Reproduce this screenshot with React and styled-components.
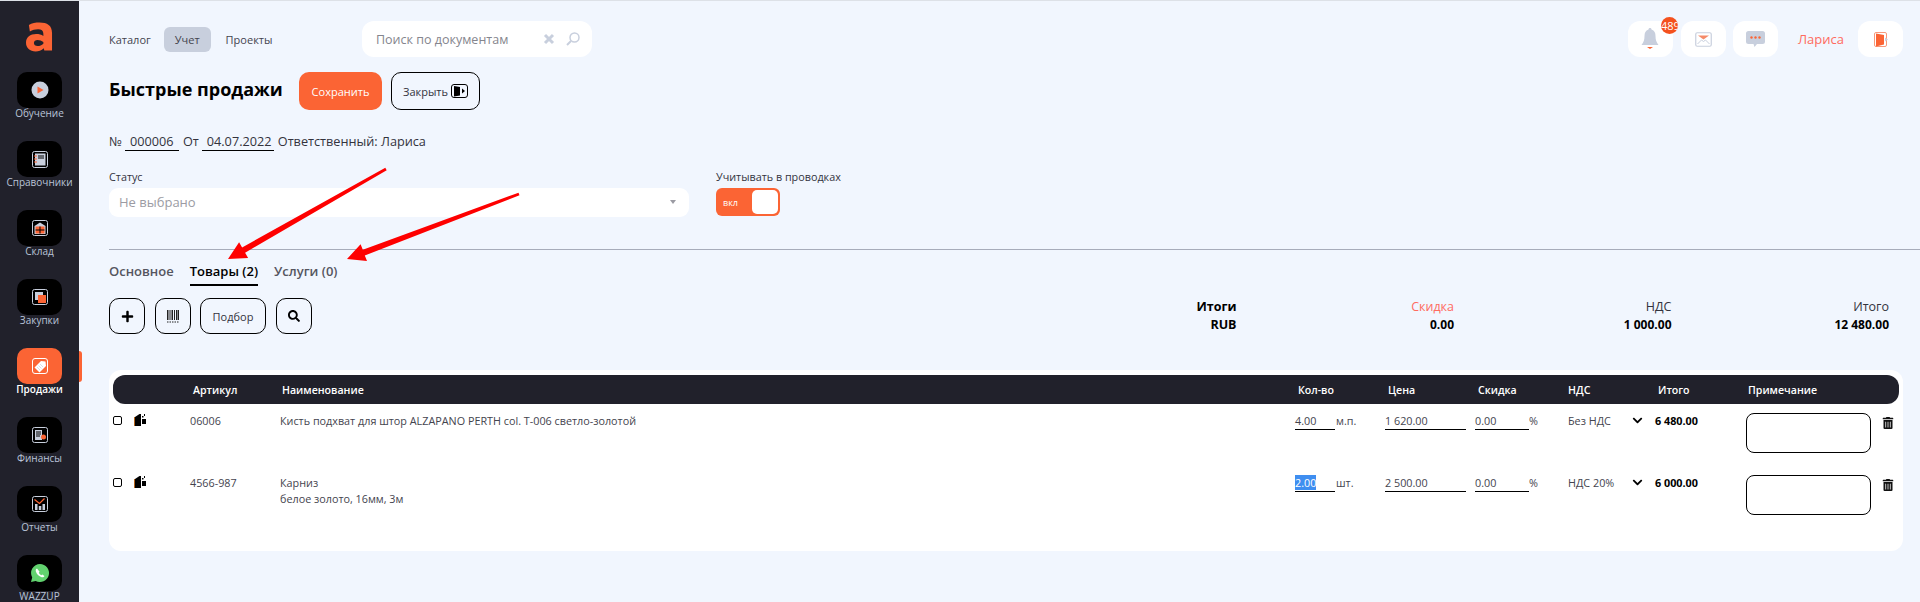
import React from "react";
import styled, { createGlobalStyle } from "styled-components";
import { FaPlus, FaSearch, FaTrashAlt, FaChevronDown } from "react-icons/fa";

const orange = "#fb6434";
const dark = "#21212b";
const grey = "#c8cfdd";
const fontStack = `"Open Sans", "Noto Sans", sans-serif`;

const GlobalStyle = createGlobalStyle`
  html, body {
    margin: 0;
    height: 602px;
    overflow: hidden;
    background: #f1f6fe;
    font-family: ${fontStack};
    color: #33333d;
  }
  * { box-sizing: border-box; }
`;

const Page = styled.div`
  display: flex;
  height: 602px;
  border-top: 1px solid #dde1e7;
  position: relative;
  overflow: hidden;
`;

const Sidebar = styled.nav`
  width: 79px;
  flex: none;
  background: ${dark};
  display: flex;
  flex-direction: column;
  align-items: center;
  padding-top: 21px;
`;

const Logo = styled.div`
  height: 50px;
  flex: none;
  display: flex;
  align-items: flex-start;
  justify-content: center;
`;

const NavItem = styled.div`
  width: 79px;
  height: 69px;
  flex: none;
  display: flex;
  flex-direction: column;
  align-items: center;
  position: relative;
  color: ${(p) => (p.$active ? "#fff" : "#b9c4d8")};
  font-size: 10px;
  line-height: 11px;
  font-weight: ${(p) => (p.$active ? 600 : 400)};
`;

const NavTile = styled.div`
  width: 45px;
  height: 36px;
  border-radius: 10px;
  background: ${(p) => (p.$active ? orange : "#000")};
  display: flex;
  align-items: center;
  justify-content: center;
  flex: none;
`;

const ActiveMark = styled.span`
  position: absolute;
  right: -3px;
  top: 3px;
  width: 3px;
  height: 31px;
  border-radius: 0 3px 3px 0;
  background: ${orange};
`;

const Main = styled.main`
  flex: 1;
  min-width: 0;
  padding: 20px 17px 0 30px;
`;

const TopBar = styled.header`
  display: flex;
  align-items: center;
  height: 36px;
`;

const TopNav = styled.div`
  display: flex;
  align-items: center;
  width: 253px;
  flex: none;
`;

const TopLink = styled.a`
  font-size: 11px;
  height: 25px;
  line-height: 25px;
  padding: 0 ${(p) => (p.$active ? "11px" : "0")};
  margin: 0 ${(p) => (p.$active ? "15px 0 13px" : "0")};
  border-radius: 6px;
  color: #44444e;
  background: ${(p) => (p.$active ? grey : "transparent")};
`;

const SearchBox = styled.div`
  width: 230px;
  height: 36px;
  border-radius: 12px;
  background: #fff;
  display: flex;
  align-items: center;
  padding: 0 12px 0 14px;
  font-size: 12.5px;
  color: #85858d;
`;

const SearchText = styled.span`
  flex: 1;
`;

const TopRight = styled.div`
  margin-left: auto;
  display: flex;
  align-items: center;
`;

const IconTile = styled.div`
  position: relative;
  width: 45px;
  height: 36px;
  border-radius: 12px;
  background: #fff;
  display: flex;
  align-items: center;
  justify-content: center;
  margin-right: ${(p) => p.$gap || 0}px;
`;

const Badge = styled.span`
  position: absolute;
  top: -4px;
  right: -5px;
  width: 17px;
  height: 17px;
  border-radius: 50%;
  background: #f4511e;
  color: #fff;
  font-size: 11px;
  line-height: 17px;
  text-align: center;
  white-space: nowrap;
  overflow: hidden;
`;

const UserName = styled.span`
  color: #ff6b5e;
  font-size: 13px;
  margin-right: 14px;
`;

const TitleRow = styled.div`
  display: flex;
  align-items: center;
  margin-top: 15px;
  height: 38px;
`;

const Title = styled.h1`
  margin: 0 17px 5px 0;
  width: 173px;
  white-space: nowrap;
  font-size: 18px;
  line-height: 28px;
  font-weight: 700;
  color: #000;
`;

const SaveButton = styled.button`
  width: 83px;
  height: 38px;
  border: 0;
  border-radius: 10px;
  background: ${orange};
  color: #fff;
  font: 500 11px ${fontStack};
`;

const OutlineButton = styled.button`
  height: ${(p) => p.$h || 36}px;
  width: ${(p) => p.$w || 36}px;
  margin-left: ${(p) => p.$ml || 0}px;
  flex: none;
  border: 1px solid #000;
  border-radius: 10px;
  background: transparent;
  color: #33333d;
  display: flex;
  align-items: center;
  justify-content: center;
  gap: 3px;
  padding: 0;
  font: 400 11px ${fontStack};
`;

const DocLine = styled.div`
  margin-top: 21px;
  height: 20px;
  display: flex;
  align-items: flex-end;
  font-size: 12.7px;
  line-height: 20px;
  color: #33333d;
`;

const DocField = styled.span`
  display: inline-block;
  width: ${(p) => p.$w}px;
  margin: 0 ${(p) => p.$r}px 0 ${(p) => p.$l}px;
  padding-left: 5px;
  border-bottom: 1px solid #000;
  height: 20px;
`;

const Fields = styled.div`
  display: flex;
  margin-top: 19px;
`;

const FieldLabel = styled.div`
  font-size: 10.8px;
  line-height: 14px;
  margin-bottom: 4px;
  color: #33333d;
`;

const SelectBox = styled.div`
  width: 580px;
  height: 29px;
  border-radius: 9px;
  background: #fff;
  display: flex;
  align-items: center;
  justify-content: space-between;
  padding: 0 13px 1px 10px;
  font-size: 13px;
  color: #9b9ba3;
`;

const Caret = styled.span`
  width: 0;
  height: 0;
  border-left: 3px solid transparent;
  border-right: 3px solid transparent;
  border-top: 4px solid #9b9ba3;
`;

const ToggleColumn = styled.div`
  margin-left: 27px;
`;

const Toggle = styled.div`
  width: 64px;
  height: 28px;
  border-radius: 6px;
  background: ${orange};
  color: #fff;
  font-size: 9px;
  display: flex;
  align-items: center;
  justify-content: space-between;
  padding: 0 2px 0 7px;
`;

const ToggleKnob = styled.span`
  width: 26px;
  height: 24px;
  border-radius: 5px;
  background: #fff;
`;

const Divider = styled.hr`
  margin: 32px -17px 0 0;
  border: 0;
  height: 1px;
  background: #a7acba;
`;

const Tabs = styled.div`
  display: flex;
  gap: 16px;
  height: 36px;
  margin-bottom: 12px;
`;

const Tab = styled.div`
  font-size: 13px;
  font-weight: 600;
  padding-top: 12px;
  line-height: 18px;
  height: 36px;
  color: ${(p) => (p.$active ? "#000" : "#55555f")};
  border-bottom: 2px solid ${(p) => (p.$active ? "#000" : "transparent")};
`;

const ToolRow = styled.div`
  display: flex;
  height: 36px;
`;

const Totals = styled.div`
  margin-left: auto;
  padding-right: 14px;
  display: flex;
`;

const TotalColumn = styled.div`
  width: 217.5px;
  text-align: right;
  font-size: 12.5px;
  line-height: 18px;
  color: ${(p) => (p.$bold ? "#000" : "#33333d")};
  font-weight: ${(p) => (p.$bold ? 700 : 400)};
`;

const TotalHead = styled.div`
  color: ${(p) => p.$color || "inherit"};
`;

const TotalValue = styled.div`
  font-size: 12px;
  font-weight: 700;
  color: #000;
`;

const Card = styled.section`
  margin-top: 36px;
  padding: 5px 4px 23px;
  border-radius: 12px;
  background: #fff;
`;

const gridColumns = "21px 56px 90px 1015px 90px 90px 90px 90px 91px 136px 1fr";

const HeadRow = styled.div`
  display: grid;
  grid-template-columns: ${gridColumns};
  align-items: center;
  height: 29px;
  border-radius: 12px;
  background: ${dark};
  color: #fff;
  font-size: 10.6px;
  font-weight: 600;
`;

const HeadCell = styled.div`
  grid-column: ${(p) => p.$col};
  padding-left: ${(p) => p.$pl ?? 3}px;
`;

const Row = styled.div`
  display: grid;
  grid-template-columns: ${gridColumns};
  align-items: start;
  height: 62px;
  padding-top: 9px;
  font-size: 10.8px;
  line-height: 16px;
  color: #44444e;
`;

const Check = styled.input.attrs({ type: "checkbox" })`
  appearance: none;
  width: 9px;
  height: 9px;
  margin: 3px 0 0 0;
  border: 1px solid #000;
  border-radius: 2px;
  background: #fff;
`;

const CopyIcon = styled.svg`
  width: 12px;
  height: 12px;
  margin-top: 1px;
`;

const AmountCell = styled.div`
  display: flex;
`;

const UnderField = styled.div`
  width: ${(p) => p.$w}px;
  height: 17px;
  border-bottom: 1.5px solid #000;
  flex: none;
`;

const Selected = styled.span`
  background: #3f8ef0;
  color: #fff;
`;

const Unit = styled.span`
  margin-left: ${(p) => p.$ml || 0}px;
`;

const VatCell = styled.div`
  padding-left: 3px;
  display: flex;
`;

const VatText = styled.span`
  width: 64px;
  flex: none;
`;

const VatChevron = styled(FaChevronDown)`
  margin-top: 2px;
  color: #000;
`;

const TotalCell = styled.div`
  font-weight: 700;
  color: #000;
`;

const Note = styled.textarea`
  width: 125px;
  height: 40px;
  display: block;
  border: 1px solid #000;
  border-radius: 8px;
  background: #fff;
  resize: none;
`;

const Trash = styled.div`
  margin-top: 4px;
  line-height: 0;
  color: #111;
`;

const ArrowLayer = styled.svg`
  position: absolute;
  left: 0;
  top: 0;
  width: 1920px;
  height: 602px;
  pointer-events: none;
`;

const navItems = [
  { label: "Обучение", icon: <svg width="26" height="26" viewBox="0 0 26 26"><circle cx="13" cy="13" r="8.5" fill={grey} /><path d="M10.5 9.5l6 3.5-6 3.5z" fill={orange} /></svg> },
  { label: "Справочники", icon: <svg width="26" height="26" viewBox="0 0 26 26"><rect x="5.5" y="5.5" width="15" height="16" rx="2" fill="none" stroke={grey} /><rect x="8" y="7.5" width="10.5" height="12" fill={grey} /><path d="M7 10h3M7 13h3M7 16h3" stroke={orange} strokeWidth="1.2" /><path d="M11 10h6M11 12h6" stroke="#000" /></svg> },
  { label: "Склад", icon: <svg width="26" height="26" viewBox="0 0 26 26"><rect x="5.5" y="5.5" width="15" height="15" rx="2" fill="none" stroke={grey} /><path d="M7.5 11l5.5-3.5 5.5 3.5v8h-11z" fill={grey} /><rect x="8.5" y="11.5" width="9" height="7" fill={orange} /><path d="M13 11.5v7M8.5 15h9" stroke="#000" /></svg> },
  { label: "Закупки", icon: <svg width="26" height="26" viewBox="0 0 26 26"><rect x="5.5" y="5.5" width="15" height="15" rx="2" fill="none" stroke={grey} /><rect x="8" y="8" width="8" height="8" fill={grey} /><rect x="11" y="11" width="8" height="8" fill={orange} /></svg> },
  { label: "Продажи", active: true, icon: <svg width="26" height="26" viewBox="0 0 26 26"><rect x="5.5" y="5.5" width="15" height="15" rx="2.5" fill="none" stroke="#fff" /><path d="M7.5 14.5l6.5-6.500 4.500.5.5 4.500-6.500 6.500z" fill="#fff" /><path d="M10 14l3 3M11.500 12.500l3 3M13 11l3 3" stroke={grey} strokeWidth=".7" /></svg> },
  { label: "Финансы", icon: <svg width="26" height="26" viewBox="0 0 26 26"><rect x="5.5" y="5.5" width="15" height="15" rx="2" fill="none" stroke={grey} /><rect x="8" y="8" width="7" height="10" fill={grey} /><path d="M9 10h5M9 12h5M9 14h4" stroke="#000" /><circle cx="16.500" cy="15" r="2.500" fill={orange} /></svg> },
  { label: "Отчеты", icon: <svg width="26" height="26" viewBox="0 0 26 26"><rect x="5.5" y="5.5" width="15" height="15" rx="2" fill="none" stroke={grey} /><path d="M8 13h2.500v6H8zM11.800 15h2.500v4h-2.500zM15.500 13h2.500v6h-2.500z" fill={grey} /><path d="M7.500 8.500l5 4 5-5" fill="none" stroke={orange} strokeWidth="1.300" /></svg> },
  { label: "WAZZUP", icon: <svg width="20" height="20" viewBox="0 0 20 20"><path d="M10 1a9 9 0 1 1-4.300 16.900L1 19l1.200-4.600A9 9 0 0 1 10 1z" fill="#62d26f" /><path d="M7 5.500c-1 .5-1.500 1.500-1.200 2.800.6 2.700 3.200 5.300 5.900 5.900 1.300.3 2.300-.2 2.800-1.200l-2.200-1.500-1 .8c-1-.5-2-1.500-2.500-2.500l.8-1z" fill="#fff" /></svg> },
];

const CopyGlyph = () => (
  <CopyIcon viewBox="0 0 12 12">
    <path d="M0 3h1v9H0z" fill="#b5651d" />
    <path d="M1 3l4.500-3h1.500v12H1z" fill="#000" />
    <path d="M8 2h1.500v1.500H8zM10 0h1v2h-1zM8 5h4v5H8z" fill="#000" />
  </CopyIcon>
);

const rows = [
  { article: "06006", name: ["Кисть подхват для штор ALZAPANO PERTH col. T-006 светло-золотой"], qty: "4.00", unit: "м.п.", price: "1 620.00", vat: "Без НДС", total: "6 480.00" },
  { article: "4566-987", name: ["Карниз", "белое золото, 16мм, 3м"], qty: "2.00", selected: true, unit: "шт.", price: "2 500.00", vat: "НДС 20%", total: "6 000.00" },
];

const App = () => (
  <Page>
    <GlobalStyle />
    <Sidebar>
      <Logo>
        <svg width="27" height="30" viewBox="0 0 28 30">
          <path fill={orange} d="M3 2.500C6 .5 10 0 14 0c8 0 13 3 13 11v18h-8l-.6-2.400C16 29 13 30 10 30 4 30 0 26.500 0 21s4.500-9 10.500-9c3 0 5.500.6 7.500 2v-2.500c0-3-2-4.500-5.500-4.500-3 0-6 .8-8.500 2.200zM12 18c-2.200 0-3.800 1.300-3.800 3.200s1.600 3.200 3.800 3.200c2.300 0 4.200-1 6-2.500v-1.600C16.200 18.700 14.300 18 12 18z" />
        </svg>
      </Logo>
      {navItems.map((item) => (
        <NavItem key={item.label} $active={item.active}>
          <NavTile $active={item.active}>{item.icon}</NavTile>
          {item.label}
          {item.active && <ActiveMark />}
        </NavItem>
      ))}
    </Sidebar>
    <Main>
      <TopBar>
        <TopNav>
          <TopLink>Каталог</TopLink>
          <TopLink $active>Учет</TopLink>
          <TopLink>Проекты</TopLink>
        </TopNav>
        <SearchBox>
          <SearchText>Поиск по документам</SearchText>
          <svg width="12" height="12" viewBox="0 0 12 12"><path d="M2 2l8 8M10 2l-8 8" stroke={grey} strokeWidth="3" /></svg>
          <svg width="14" height="14" viewBox="0 0 14 14" style={{ marginLeft: 11 }}><circle cx="8.500" cy="5.500" r="4.500" fill="none" stroke={grey} strokeWidth="1.500" /><path d="M5 9l-4 4" stroke={grey} strokeWidth="2" /></svg>
        </SearchBox>
        <TopRight>
          <IconTile $gap={8}>
            <svg width="18" height="24" viewBox="0 0 18 24"><path d="M9 1c1 0 1.500.7 1.500 1.500C13.500 3.500 14.500 6 14.500 9c0 4 1 6.500 3 9H.5c2-2.500 3-5 3-9 0-3 1-5.500 4-6.500C7.500 1.700 8 1 9 1z" fill={grey} /><path d="M6 20h6l-3 2z" fill={orange} /></svg>
            <Badge>489</Badge>
          </IconTile>
          <IconTile $gap={7}>
            <svg width="17" height="15" viewBox="0 0 17 15"><rect x=".75" y=".75" width="15.500" height="13.500" rx="1.500" fill="none" stroke={grey} strokeWidth="1.200" /><path d="M3 3.500h11L8.500 7.500z" fill="#f58a68" /><path d="M2.500 12l4-4 2 1.500 2-1.500 4 4" fill="none" stroke={grey} /></svg>
          </IconTile>
          <IconTile $gap={20}>
            <svg width="19" height="17" viewBox="0 0 19 17"><path d="M2.500 0h14A2.500 2.500 0 0 1 19 2.500v8a2.500 2.500 0 0 1-2.500 2.500H11l-2.500 3-1-3H2.500A2.500 2.500 0 0 1 0 10.500v-8A2.500 2.500 0 0 1 2.500 0z" fill={grey} /><circle cx="5.500" cy="6.500" r="1.200" fill={orange} /><circle cx="9.500" cy="6.500" r="1.200" fill={orange} /><circle cx="13.500" cy="6.500" r="1.200" fill={orange} /></svg>
          </IconTile>
          <UserName>Лариса</UserName>
          <IconTile>
            <svg width="14" height="15" viewBox="0 0 14 15"><rect x=".5" y=".5" width="12" height="14" rx="1.500" fill="none" stroke="#f79a7c" /><path d="M2 1.500l8 1.500v9.500l-8 2z" fill={orange} /><path d="M11 5.500l3 2-3 2z" fill={grey} /></svg>
          </IconTile>
        </TopRight>
      </TopBar>

      <TitleRow>
        <Title>Быстрые продажи</Title>
        <SaveButton>Сохранить</SaveButton>
        <OutlineButton $w={89} $h={38} $ml={9}>
          Закрыть
          <svg width="17" height="14" viewBox="0 0 17 14"><rect x=".5" y=".5" width="16" height="13" rx="2.500" fill="none" stroke="#000" /><path d="M3 2l6 1v8.500l-6 1z" fill="#000" /><path d="M11 4.500l3 2.500-3 2.500z" fill="#000" /></svg>
        </OutlineButton>
      </TitleRow>

      <DocLine>
        №
        <DocField $w={54} $l={3} $r={4}>000006</DocField>
        От
        <DocField $w={72} $l={3} $r={4}>04.07.2022</DocField>
        Ответственный: Лариса
      </DocLine>

      <Fields>
        <div>
          <FieldLabel>Статус</FieldLabel>
          <SelectBox>
            Не выбрано
            <Caret />
          </SelectBox>
        </div>
        <ToggleColumn>
          <FieldLabel>Учитывать в проводках</FieldLabel>
          <Toggle>
            вкл
            <ToggleKnob />
          </Toggle>
        </ToggleColumn>
      </Fields>

      <Divider />

      <Tabs>
        <Tab>Основное</Tab>
        <Tab $active>Товары (2)</Tab>
        <Tab>Услуги (0)</Tab>
      </Tabs>

      <ToolRow>
        <OutlineButton><FaPlus size={13} color="#000" /></OutlineButton>
        <OutlineButton $ml={10}>
          <svg width="12" height="13" viewBox="0 0 12 13"><path d="M0 0h1.500v10H0zM2.500 0h1v10h-1zM4.500 0h1.500v10H4.500zM7 0h1v10H7zM9 0h1v10H9zM10.500 0H12v10h-1.500z" fill="#222" /><path d="M0 12h12" stroke="#222" strokeDasharray="1.500 1" /></svg>
        </OutlineButton>
        <OutlineButton $w={66} $ml={9}>Подбор</OutlineButton>
        <OutlineButton $ml={10}><FaSearch size={12} color="#000" /></OutlineButton>
        <Totals>
          <TotalColumn $bold><div>Итоги</div><div>RUB</div></TotalColumn>
          <TotalColumn><TotalHead $color="#ff6b5e">Скидка</TotalHead><TotalValue>0.00</TotalValue></TotalColumn>
          <TotalColumn><TotalHead>НДС</TotalHead><TotalValue>1 000.00</TotalValue></TotalColumn>
          <TotalColumn><TotalHead>Итого</TotalHead><TotalValue>12 480.00</TotalValue></TotalColumn>
        </Totals>
      </ToolRow>

      <Card>
        <HeadRow>
          <HeadCell $col={3}>Артикул</HeadCell>
          <HeadCell $col={4} $pl={2}>Наименование</HeadCell>
          <HeadCell $col={5}>Кол-во</HeadCell>
          <HeadCell $col={6}>Цена</HeadCell>
          <HeadCell $col={7}>Скидка</HeadCell>
          <HeadCell $col={8}>НДС</HeadCell>
          <HeadCell $col={9}>Итого</HeadCell>
          <HeadCell $col={10} $pl={2}>Примечание</HeadCell>
        </HeadRow>
        {rows.map((row) => (
          <Row key={row.article}>
            <Check />
            <CopyGlyph />
            <div>{row.article}</div>
            <div>{row.name.map((line) => <div key={line}>{line}</div>)}</div>
            <AmountCell>
              <UnderField $w={40}>{row.selected ? <Selected>{row.qty}</Selected> : row.qty}</UnderField>
              <Unit $ml={1}>{row.unit}</Unit>
            </AmountCell>
            <AmountCell><UnderField $w={81}>{row.price}</UnderField></AmountCell>
            <AmountCell>
              <UnderField $w={54}>0.00</UnderField>
              <Unit>%</Unit>
            </AmountCell>
            <VatCell>
              <VatText>{row.vat}</VatText>
              <VatChevron size={11} />
            </VatCell>
            <TotalCell>{row.total}</TotalCell>
            <Note readOnly />
            <Trash><FaTrashAlt size={12} /></Trash>
          </Row>
        ))}
      </Card>
    </Main>
    <ArrowLayer viewBox="0 0 1920 602">
      <polygon points="386.7,169.3 385.3,166.7 242.1,246.5 239.1,241.3 228,258 248.1,256.9 245.1,251.7" fill="#fe0000" />
      <polygon points="519.5,194.3 518.5,191.7 362.8,248.8 360.6,243.2 347,258 367,260 364.8,254.4" fill="#fe0000" />
    </ArrowLayer>
  </Page>
);

export default App;
